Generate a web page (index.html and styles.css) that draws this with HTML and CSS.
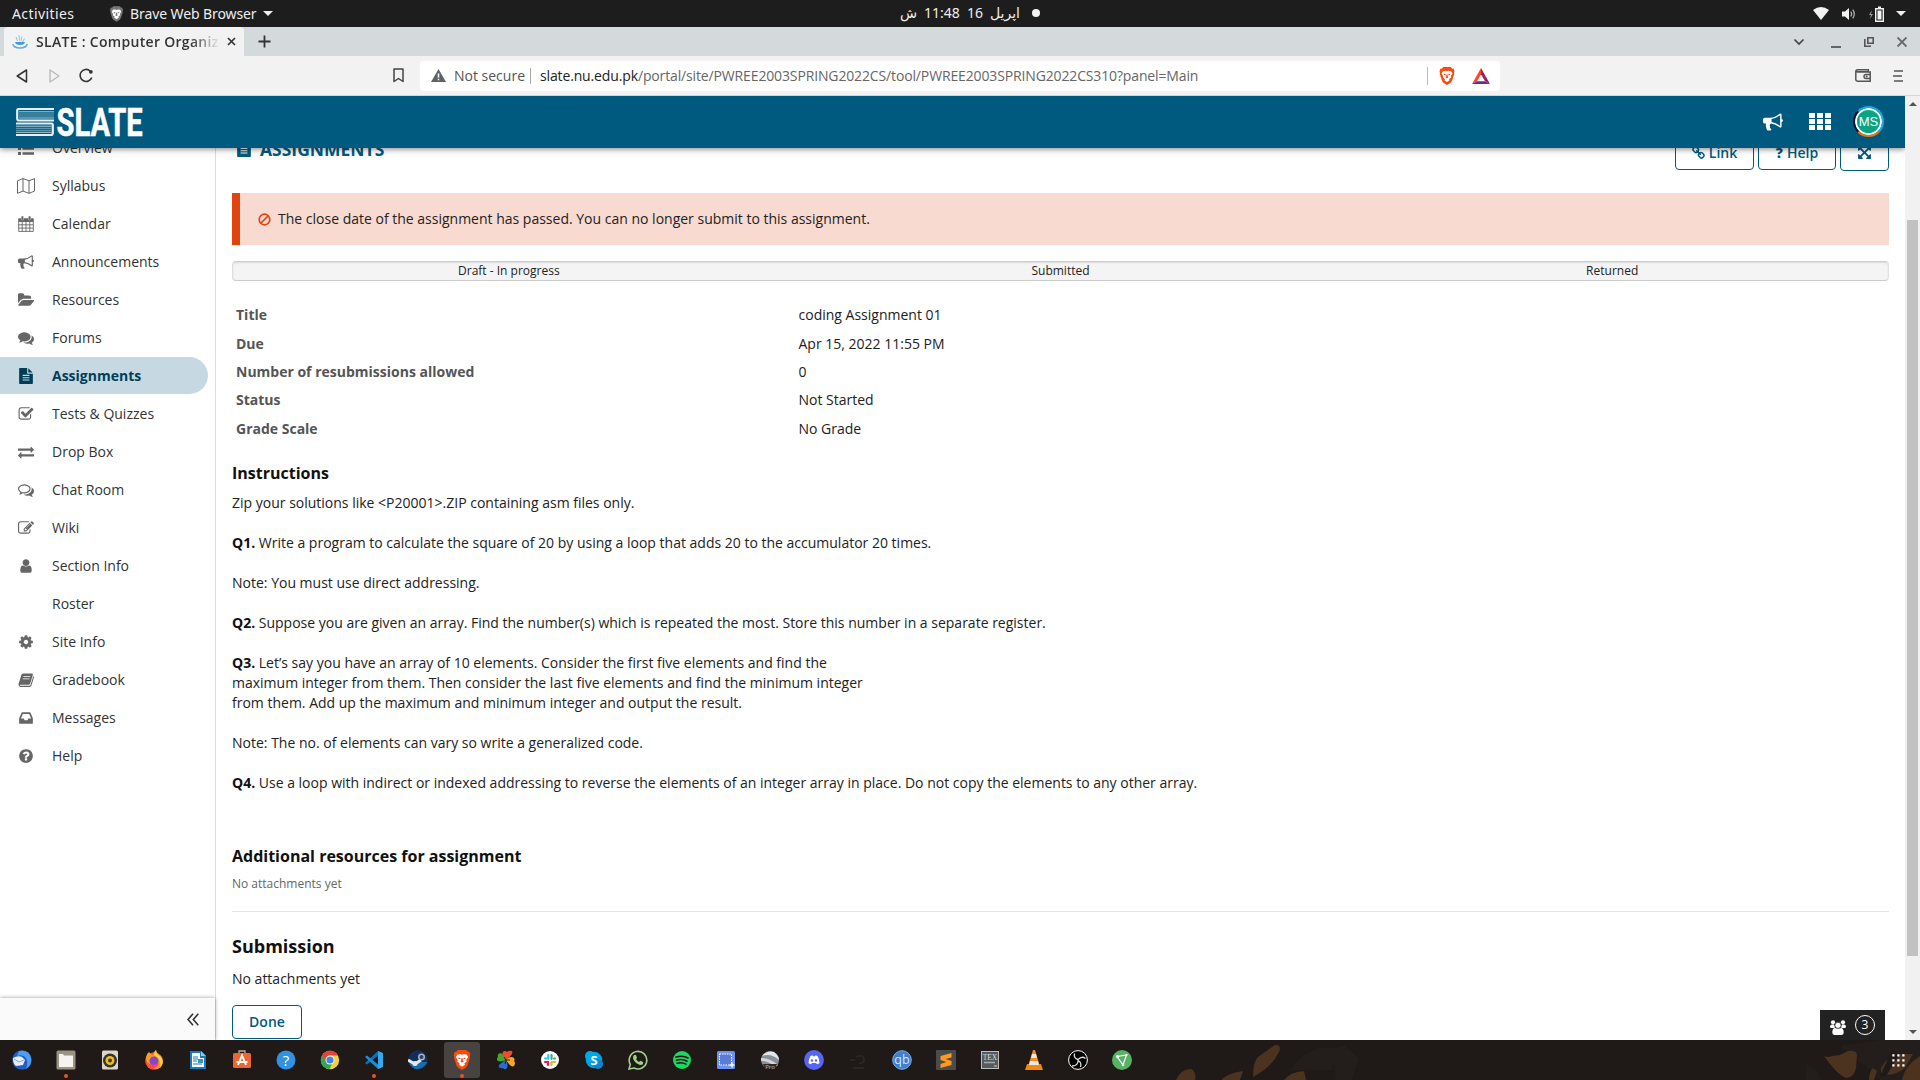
FILE: index.html
```html
<!DOCTYPE html>
<html lang="en">
<head>
<meta charset="utf-8">
<title>SLATE : Computer Organization</title>
<link rel="stylesheet" href="styles.css">
</head>
<body>
<svg class="defs" width="0" height="0">
  <symbol id="bullhorn" viewBox="0 0 1792 1792"><path d="M1664 640q53 0 90.5 37.5t37.5 90.5-37.5 90.5-90.5 37.5v384q0 52-38 90t-90 38q-417-347-812-380-58 19-91 66t-31 100.5 40 92.5q-20 33-23 65.5t6 58 33.5 55 48 50 61.5 50.5q-29 58-111.5 83t-168.5 11.5-132-55.5q-7-23-29.5-87.5t-32-94.5-23-89-15-101 3.5-98.5 22-110.5h-122q-66 0-113-47t-47-113v-192q0-66 47-113t113-47h480q435 0 896-384 52 0 90 38t38 90v384zm-128 604v-954q-394 302-768 343v270q377 42 768 341z"/></symbol>
  <symbol id="folder" viewBox="0 0 1792 1792"><path d="M1815 952q0 31-31 66l-336 396q-43 51-120.5 86.5t-143.5 35.5h-1088q-34 0-60.5-13t-26.5-43q0-31 31-66l336-396q43-51 120.5-86.5t143.5-35.5h1088q34 0 60.5 13t26.5 43zm-343-344v160h-832q-94 0-197 47.5t-164 119.5l-337 396-5 6q0-4-.5-12.5t-.5-12.5v-960q0-92 66-158t158-66h320q92 0 158 66t66 158v32h544q92 0 158 66t66 158z"/></symbol>
  <symbol id="comments" viewBox="0 0 1792 1792"><path d="M1408 768q0 139-94 257t-256.5 186.5-353.5 68.5q-86 0-176-16-124 88-278 128-36 9-86 16h-3q-11 0-20.5-8t-11.5-21q-1-3-1-6.5t.5-6.5 2-6l2.5-5 3.5-5.5 4-5 4.5-5 4-4.5q5-6 23-25t26-29.5 22.5-29 25-38.5 20.5-44q-124-72-195-177t-71-224q0-139 94-257t256.5-186.5 353.5-68.5 353.5 68.5 256.5 186.5 94 257zm384 256q0 120-71 224.5t-195 176.5q10 24 20.5 44t25 38.5 22.5 29 26 29.5 23 25q1 1 4 4.5t4.5 5 4 5 3.5 5.5l2.5 5 2 6 .5 6.5-1 6.5q-3 14-13 22t-22 7q-50-7-86-16-154-40-278-128-90 16-176 16-271 0-472-132 58 4 88 4 161 0 309-45t264-129q125-92 192-212t67-254q0-77-23-152 129 71 204 178t75 230z"/></symbol>
  <symbol id="comments-o" viewBox="0 0 1792 1792"><path d="M704 384q-153 0-286 52t-211.5 141-78.5 191q0 82 53 158t149 132l97 56-35 84q34-20 62-39l44-31 53 10q78 14 153 14 153 0 286-52t211.5-141 78.5-191-78.5-191-211.5-141-286-52zm0-128q191 0 353.5 68.5t256.5 186.5 94 257-94 257-256.5 186.5-353.5 68.5q-86 0-176-16-124 88-278 128-36 9-86 16h-3q-11 0-20.5-8t-11.5-21q-1-3-1-6.5t.5-6.5 2-6l2.5-5 3.5-5.5 4-5 4.5-5 4-4.5q5-6 23-25t26-29.5 22.5-29 25-38.5 20.5-44q-124-72-195-177t-71-224q0-139 94-257t256.5-186.5 353.5-68.5zm822 1169q10 24 20.5 44t25 38.5 22.5 29 26 29.5 23 25q1 1 4 4.5t4.5 5 4 5 3.5 5.5l2.5 5 2 6 .5 6.5-1 6.5q-3 14-13 22t-22 7q-50-7-86-16-154-40-278-128-90 16-176 16-271 0-472-132 58 4 88 4 161 0 309-45t264-129q125-92 192-212t67-254q0-77-23-152 129 71 204 178t75 230q0 120-71 224.5t-195 176.5z"/></symbol>
  <symbol id="file" viewBox="0 0 1792 1792"><path d="M1596 476q14 14 28 36h-472v-472q22 14 36 28zm-476 164h544v1056q0 40-28 68t-68 28h-1344q-40 0-68-28t-28-68v-1600q0-40 28-68t68-28h800v544q0 40 28 68t68 28zm160 736v-64q0-14-9-23t-23-9h-704q-14 0-23 9t-9 23v64q0 14 9 23t23 9h704q14 0 23-9t9-23zm0-256v-64q0-14-9-23t-23-9h-704q-14 0-23 9t-9 23v64q0 14 9 23t23 9h704q14 0 23-9t9-23zm0-256v-64q0-14-9-23t-23-9h-704q-14 0-23 9t-9 23v64q0 14 9 23t23 9h704q14 0 23-9t9-23z"/></symbol>
  <symbol id="check" viewBox="0 0 1792 1792"><path d="M1472 930v318q0 119-84.500 203.500t-203.500 84.500h-832q-119 0-203.500-84.500t-84.500-203.500v-832q0-119 84.500-203.500t203.500-84.500h832q63 0 117 25 15 7 18 23 3 17-9 29l-49 49q-10 10-23 10-3 0-9-2-23-6-45-6h-832q-66 0-113 47t-47 113v832q0 66 47 113t113 47h832q66 0 113-47t47-113v-254q0-13 9-22l64-64q10-10 23-10 6 0 12 3 20 8 20 29zm231-489l-814 814q-24 24-57 24t-57-24l-430-430q-24-24-24-57t24-57l110-110q24-24 57-24t57 24l263 263 647-647q24-24 57-24t57 24l110 110q24 24 24 57t-24 57z"/></symbol>
  <symbol id="exchange" viewBox="0 0 1792 1792"><path d="M1792 1184v192q0 13-9.500 22.500t-22.500 9.500h-1376v192q0 13-9.500 22.500t-22.500 9.500q-12 0-24-10l-319-320q-9-9-9-22 0-14 9-23l320-320q9-9 23-9 13 0 22.500 9.500t9.500 22.500v192h1376q13 0 22.500 9.500t9.500 22.500zm0-544q0 14-9 23l-320 320q-9 9-23 9-13 0-22.500-9.500t-9.500-22.500v-192h-1376q-13 0-22.500-9.500t-9.500-22.500v-192q0-13 9.500-22.500t22.500-9.500h1376v-192q0-14 9-23t23-9q12 0 24 10l319 319q9 9 9 23z"/></symbol>
  <symbol id="pencil" viewBox="0 0 1792 1792"><path d="M888 1184l116-116-152-152-116 116v56h96v96h56zm440-720q-16-16-33 1l-350 350q-17 17-1 33t33-1l350-350q17-17 1-33zm80 594v190q0 119-84.500 203.500t-203.500 84.500h-832q-119 0-203.500-84.500t-84.500-203.500v-832q0-119 84.500-203.500t203.500-84.500h832q63 0 117 25 15 7 18 23 3 17-9 29l-49 49q-14 14-32 8-23-6-45-6h-832q-66 0-113 47t-47 113v832q0 66 47 113t113 47h832q66 0 113-47t47-113v-126q0-13 9-22l64-64q15-15 35-7t20 29zm-96-738l288 288-672 672h-288v-288zm444 132l-92 92-288-288 92-92q28-28 68-28t68 28l152 152q28 28 28 68t-28 68z"/></symbol>
  <symbol id="user" viewBox="0 0 1792 1792"><path d="M1536 1399q0 109-62.500 187t-150.500 78h-854q-88 0-150.500-78t-62.500-187q0-85 8.500-160.500t31.500-152 58.500-131 94-89 134.500-34.500q131 128 313 128t313-128q76 0 134.500 34.500t94 89 58.500 131 31.500 152 8.500 160.500zm-256-887q0 159-112.500 271.500t-271.500 112.500-271.500-112.500-112.500-271.500 112.500-271.500 271.500-112.500 271.500 112.500 112.500 271.500z"/></symbol>
  <symbol id="cog" viewBox="0 0 1792 1792"><path d="M1152 896q0-106-75-181t-181-75-181 75-75 181 75 181 181 75 181-75 75-181zm512-109v222q0 12-8 23t-20 13l-185 28q-19 54-39 91 35 50 107 138 10 12 10 25t-9 23q-27 37-99 108t-94 71q-12 0-26-9l-138-108q-44 23-91 38-16 136-29 186-7 28-36 28h-222q-14 0-24.500-8.500t-11.500-21.500l-28-184q-49-16-90-37l-141 107q-10 9-25 9-14 0-25-11-126-114-165-168-7-10-7-23 0-12 8-23 15-21 51-66.500t54-70.500q-27-50-41-99l-183-27q-13-2-21-12.500t-8-23.500v-222q0-12 8-23t19-13l186-28q14-46 39-92-40-57-107-138-10-12-10-24 0-10 9-23 26-36 98.500-107.500t94.500-71.500q13 0 26 10l138 107q44-23 91-38 16-136 29-186 7-28 36-28h222q14 0 24.500 8.500t11.500 21.500l28 184q49 16 90 37l142-107q9-9 24-9 13 0 25 10 129 119 165 170 7 8 7 22 0 12-8 23-15 21-51 66.500t-54 70.500q26 50 41 98l183 28q13 2 21 12.500t8 23.500z"/></symbol>
  <symbol id="inbox" viewBox="0 0 1792 1792"><path d="M1151 960h316q-1-3-2.500-8t-2.500-8l-212-496h-708l-212 496q-1 2-2.500 8t-2.500 8h316l95 192h320zm513 30v482q0 26-19 45t-45 19h-1408q-26 0-45-19t-19-45v-482q0-62 25-123l238-552q10-25 36.500-42t52.500-17h832q26 0 52.500 17t36.500 42l238 552q25 61 25 123z"/></symbol>
  <symbol id="question" viewBox="0 0 1792 1792"><path d="M1024 1376v-192q0-14-9-23t-23-9h-192q-14 0-23 9t-9 23v192q0 14 9 23t23 9h192q14 0 23-9t9-23zm256-672q0-88-55.500-163t-138.500-116-170-41q-243 0-371 213-15 24 8 42l132 100q7 6 19 6 16 0 25-12 53-68 86-92 34-24 86-24 48 0 85.500 26t37.500 59q0 38-20 61t-68 45q-63 28-115.500 86.500t-52.500 125.500v36q0 14 9 23t23 9h192q14 0 23-9t9-23q0-19 21.500-49.500t54.500-49.500q32-18 49-28.500t46-35 44.500-48 28-60.500 12.500-81zm384 192q0 209-103 385.500t-279.500 279.500-385.500 103-385.500-103-279.500-279.500-103-385.500 103-385.500 279.500-279.500 385.500-103 385.500 103 279.500 279.500 103 385.500z"/></symbol>
  <symbol id="chain" viewBox="0 0 1792 1792"><path d="M1456 1216q0-40-28-68l-208-208q-28-28-68-28-42 0-72 32 3 3 19 18.500t21.500 21.500 15 19 13 25.500 3.500 27.500q0 40-28 68t-68 28q-15 0-27.500-3.500t-25.500-13-19-15-21.500-21.500-18.500-19q-33 31-33 73 0 40 28 68l206 207q27 27 68 27 40 0 68-26l147-146q28-28 28-67zm-703-705q0-40-28-68l-206-207q-28-28-68-28-39 0-68 27l-147 146q-28 28-28 67 0 40 28 68l208 208q27 27 68 27 42 0 72-31-3-3-19-18.500t-21.500-21.500-15-19-13-25.500-3.500-27.500q0-40 28-68t68-28q15 0 27.500 3.500t25.500 13 19 15 21.500 21.500 18.500 19q33-31 33-73zm895 705q0 120-85 203l-147 146q-83 83-203 83-121 0-204-85l-206-207q-83-83-83-203 0-123 88-209l-88-88q-86 88-208 88-120 0-204-84l-208-208q-84-84-84-204t85-203l147-146q83-83 203-83 121 0 204 85l206 207q83 83 83 203 0 123-88 209l88 88q86-88 208-88 120 0 204 84l208 208q84 84 84 204z"/></symbol>
  <symbol id="expand" viewBox="0 0 1792 1792"><path d="M1411 541l-355 355 355 355 144-144q29-31 70-14 39 17 39 59v448q0 26-19 45t-45 19h-448q-42 0-59-40-17-39 14-69l144-144-355-355-355 355 144 144q31 30 14 69-17 40-59 40h-448q-26 0-45-19t-19-45v-448q0-42 40-59 39-17 69 14l144 144 355-355-355-355-144 144q-19 19-45 19-12 0-24-5-40-17-40-59v-448q0-26 19-45t45-19h448q42 0 59 40 17 39-14 69l-144 144 355 355 355-355-144-144q-31-30-14-69 17-40 59-40h448q26 0 45 19t19 45v448q0 42-39 59-13 5-25 5-26 0-45-19z"/></symbol>
  <symbol id="list" viewBox="0 0 16 16"><path d="M0 2h3v3H0zM4.500 2.300H16v2.400H4.500zM0 7h3v3H0zM4.500 7.300H16v2.400H4.500zM0 12h3v3H0zM4.500 12.300H16v2.400H4.500z"/></symbol>
  <symbol id="map" viewBox="0 0 18 16"><path d="M.500 2.800L6 .600l6 2.200L17.500.600v12.500L12 15.300l-6-2.200-5.500 2.200zM6 .600v12.500M12 2.800v12.500" fill="none" stroke="currentColor" stroke-width="1"/></symbol>
  <symbol id="calendar" viewBox="0 0 16 16"><path d="M.700 5.500h14.600v9.900H.700zM.700 8.800h14.600M.700 12.100h14.600M4.200 5.500v10M8 5.500v10M11.800 5.500v10" fill="none" stroke="currentColor" stroke-width=".9"/><path d="M1 2.300h14q.800 0 .800.800v2.600H.200V3.100q0-.800.800-.800z"/><path d="M3.200.900q0-.900.900-.900h.600q.900 0 .900.900v2.200q0 .900-.900.900h-.600q-.900 0-.900-.900zM10.400.900q0-.900.900-.900h.600q.900 0 .900.900v2.200q0 .900-.900.900h-.600q-.900 0-.900-.900z" stroke="#fff" stroke-width=".4"/></symbol>
  <symbol id="book" viewBox="0 0 16 16"><path fill-rule="evenodd" d="M5 1.500h9q1.200.200.800 1.600l-2.600 8.400q-.400 1.300-1.600 1.300H2.400q-.800 0-.700.500.300.500 1 .500h8.800q.800 0 1-.700l2.800-9q.900.600.600 1.500l-2.500 8q-.500 1.300-1.800 1.300H2.700Q.500 14.700.400 12.500L3.300 3q.500-1.300 1.700-1.500zm.600 2.700l-.300.900h6.800l.300-.900zm-.700 2.200l-.300.900h6.800l.300-.900z"/></symbol>
  <symbol id="people" viewBox="0 0 16 15"><circle cx="3" cy="2.300" r="2.100"/><circle cx="13" cy="2.300" r="2.100"/><path d="M0 6.500Q.300 4.400 2 4.400h2Q5 5 4.700 8H1.500Q0 8 0 6.500zM16 6.500q-.300-2.100-2-2.100h-2q-1 .600-.700 3.600h3.200q1.500 0 1.500-1.500z"/><circle cx="8" cy="5.300" r="3" stroke="#222" stroke-width=".6"/><path d="M2.300 12.500q0-4.500 2.700-4.500 3 1.600 6 0 2.700 0 2.700 4.500 0 2.400-2 2.400H4.300q-2 0-2-2.400z"/></symbol>
  <symbol id="lion" viewBox="0 0 20 24"><path d="M5 0h10l2 2.200 1.700-.2L20 6l-.700 2 .300 1.200-3 9.300Q15.500 21 10 24 4.500 21 3.400 18.500L.400 9.200.700 8 0 6l1.300-4L3 2.200z"/><path d="M4.500 5.500L8 5l2 .8 2-.8 3.500.5 1.800 3-2.200 3.500.600 1.800-3 2.400.8 1.600L10 20l-3.500-2.200.8-1.600-3-2.400.6-1.800-2.200-3.500z" fill="#fff"/><path d="M5.500 9l3 .8-.5 1.300-2-.6zM14.500 9l-3 .8.500 1.300 2-.6zM9.200 10h1.600l.4 3.200.8.800-2 1-2-1 .8-.8z" class="lion-face"/></symbol>
</svg>

<div class="topbar">
  <span class="activities">Activities</span>
  <svg class="top-lion" width="13" height="16"><use href="#lion"/></svg>
  <span class="app-name">Brave Web Browser</span>
  <i class="caret"></i>
  <div class="clock"><span class="ar">ش</span><span>11:48</span><span>16</span><span class="ar">اپریل</span><i class="dot"></i></div>
  <div class="tray">
    <svg width="16" height="13" viewBox="0 0 16 13"><path d="M0 3Q8-3 16 3L8 13z" fill="#f2f2f2"/></svg>
    <svg width="16" height="14" viewBox="0 0 16 14"><path d="M1 4.500h3L8 1v12L4 9.500H1z" fill="#f2f2f2"/><path d="M9.800 4.500q1.700 2.500 0 5M11.800 2.600q3 4.400 0 8.800" fill="none" stroke="#aaa" stroke-width="1.300"/></svg>
    <svg width="15" height="16" viewBox="0 0 15 16"><path d="M3 4L0 9h2l-1 4 3-5H2z" fill="#999"/><path d="M6.700 2.700h7.600v12.600H6.700z" fill="none" stroke="#f2f2f2" stroke-width="1.400"/><path d="M8.500 4.500h4v9h-4zM9 .5h3v2H9z" fill="#f2f2f2"/></svg>
    <i class="caret"></i>
  </div>
</div>

<div class="tabstrip">
  <div class="tab">
    <svg width="16" height="14" viewBox="0 0 16 14"><path d="M4 2l1.500 4M7 0l.5 5.500M10 1.500L9 6M12.500 3.500L10.500 7" stroke="#8bc3e8" stroke-width="1" fill="none"/><path d="M3 7h10q-.500 3-5 3T3 7z" fill="#3f9bdc"/><path d="M.700 9q1 4 7.300 4t7.300-4" fill="none" stroke="#5bace2" stroke-width="1.400"/></svg>
    <span class="tab-title">SLATE : Computer Organiza</span>
    <svg class="tab-x" width="9" height="9" viewBox="0 0 9 9"><path d="M1 1l7 7M8 1L1 8" stroke="#333" stroke-width="1.700"/></svg>
  </div>
  <svg width="13" height="13" viewBox="0 0 13 13"><path d="M6.500.500v12M.500 6.500h12" stroke="#333" stroke-width="1.800"/></svg>
  <div class="win-buttons">
    <svg width="12" height="8" viewBox="0 0 12 8"><path d="M1.500 1.500L6 6l4.500-4.500" stroke="#444" stroke-width="1.700" fill="none"/></svg>
    <svg width="10" height="12" viewBox="0 0 10 12"><path d="M0 10h10v2H0z" fill="#666"/></svg>
    <svg width="10" height="10" viewBox="0 0 10 10"><path d="M3.800.800h5.400v5.400H3.800zM.800 2v7.200H7" fill="none" stroke="#555" stroke-width="1.600"/></svg>
    <svg width="10" height="10" viewBox="0 0 10 10"><path d="M.500.500l9 9M9.500.500l-9 9" stroke="#666" stroke-width="1.900"/></svg>
  </div>
</div>

<div class="toolbar">
  <svg class="nav" width="12" height="14" viewBox="0 0 12 14"><path d="M10.500 1v12L1.200 7z" fill="none" stroke="#333" stroke-width="1.500" stroke-linejoin="round"/></svg>
  <svg class="nav" width="12" height="14" viewBox="0 0 12 14"><path d="M2 1v12l9-6z" fill="none" stroke="#bbb" stroke-width="1.400" stroke-linejoin="round"/></svg>
  <svg class="nav" width="15" height="15" viewBox="0 0 15 15"><path d="M12.800 9.500A6 6 0 1 1 11 2.800" fill="none" stroke="#333" stroke-width="1.600"/><circle cx="11.800" cy="3.800" r="1.900" fill="#333"/></svg>
  <svg class="bookmark" width="11" height="15" viewBox="0 0 11 15"><path d="M1 1h9v12.500L5.500 10.500 1 13.500z" fill="none" stroke="#444" stroke-width="1.500" stroke-linejoin="round"/></svg>
  <div class="omnibox">
    <svg width="15" height="13" viewBox="0 0 15 13"><path d="M7.500 0L15 13H0z" fill="#5f6368"/><path d="M6.700 4.500h1.600v4H6.700zM6.700 9.700h1.600v1.600H6.700z" fill="#fff"/></svg>
    <span class="not-secure">Not secure</span>
    <span class="url"><b>slate.nu.edu.pk</b>/portal/site/PWREE2003SPRING2022CS/tool/PWREE2003SPRING2022CS310?panel=Main</span>
    <div class="shields">
      <svg class="orange" width="16" height="18"><use href="#lion"/></svg>
      <svg width="18" height="16" viewBox="0 0 18 16"><path d="M9 0L0 16l5-2.800 4-7z" fill="#ff4724"/><path d="M9 0l9 16-5-2.800-4-7z" fill="#9e1f63"/><path d="M0 16h18l-5-2.800H5z" fill="#662d91"/></svg>
    </div>
  </div>
  <div class="tools-right">
    <svg width="16" height="13" viewBox="0 0 16 13"><path d="M.800 2.500q0-1.700 1.700-1.700h10.800v2H1M.800 2.200v8.300q0 1.700 1.700 1.700h12.700V3H2" fill="none" stroke="#555" stroke-width="1.500"/><path d="M15 5.500h-4q-2 0-2 2t2 2h4" fill="none" stroke="#555" stroke-width="1.400"/><circle cx="11.700" cy="7.500" r="1"/></svg>
    <svg width="10" height="12" viewBox="0 0 10 12"><path d="M1 1h9M0 6h9M1 11h9" stroke="#555" stroke-width="1.700"/></svg>
  </div>
</div>

<div class="viewport">
  <div class="page">
    <header class="site-header">
      <svg class="logo" width="128" height="30" viewBox="0 0 128 30"><path d="M38 2H2.500Q1.200 2 1.200 3.500v8q0 2 1.800 2h35" fill="none" stroke="#e8eef2" stroke-width="2.200"/><path d="M0 16.500h35.500q1.300 0 1.300 1.500v8q0 2-1.800 2H0" fill="none" stroke="#e8eef2" stroke-width="2.200"/><path d="M3 4.800h35M3 11h35M0 19.200h35.500M0 25.300h35.500" stroke="#b5d0dc" stroke-width="1"/><path d="M3 7h35M3 9h35M0 21.300h35.500M0 23.300h35.500" stroke="#6fa3ba" stroke-width="1"/><text x="40.500" y="28.600" textLength="86" lengthAdjust="spacingAndGlyphs" class="logo-text">SLATE</text></svg>
      <svg class="horn" width="20" height="20"><use href="#bullhorn"/></svg>
      <svg class="apps" width="22" height="17" viewBox="0 0 22 17"><path d="M0 0h6v5H0zM8 0h6v5H8zM16 0h6v5h-6zM0 6h6v5H0zM8 6h6v5H8zM16 6h6v5h-6zM0 12h6v5H0zM8 12h6v5H8zM16 12h6v5h-6z" fill="#fff"/></svg>
      <div class="avatar">MS</div>
    </header>
    <div class="columns">
      <aside class="sidebar">
        <nav class="menu">
          <a><svg><use href="#list"/></svg>Overview</a>
          <a><svg class="wide"><use href="#map"/></svg>Syllabus</a>
          <a><svg><use href="#calendar"/></svg>Calendar</a>
          <a><svg><use href="#bullhorn"/></svg>Announcements</a>
          <a><svg><use href="#folder"/></svg>Resources</a>
          <a><svg><use href="#comments"/></svg>Forums</a>
          <a class="active"><svg><use href="#file"/></svg>Assignments</a>
          <a><svg><use href="#check"/></svg>Tests &amp; Quizzes</a>
          <a><svg><use href="#exchange"/></svg>Drop Box</a>
          <a><svg><use href="#comments-o"/></svg>Chat Room</a>
          <a><svg><use href="#pencil"/></svg>Wiki</a>
          <a><svg><use href="#user"/></svg>Section Info</a>
          <a><svg></svg>Roster</a>
          <a><svg><use href="#cog"/></svg>Site Info</a>
          <a><svg><use href="#book"/></svg>Gradebook</a>
          <a><svg><use href="#inbox"/></svg>Messages</a>
          <a><svg><use href="#question"/></svg>Help</a>
        </nav>
        <div class="collapse"><svg width="12" height="13" viewBox="0 0 12 13"><path d="M6 .800L1 6.500l5 5.700M11.300.800l-5 5.700 5 5.700" fill="none" stroke="#333" stroke-width="1.600"/></svg></div>
      </aside>
      <main class="content">
        <div class="tool-head">
          <h1><svg width="16" height="16"><use href="#file"/></svg>Assignments</h1>
          <div class="head-buttons">
            <span class="btn link"><svg width="14" height="14"><use href="#chain"/></svg>Link</span>
            <span class="btn help"><b>?</b>Help</span>
            <span class="btn full"><svg width="15" height="15"><use href="#expand"/></svg></span>
          </div>
        </div>
        <div class="alert"><svg width="13" height="13" viewBox="0 0 13 13"><circle cx="6.500" cy="6.500" r="5.300" fill="none" stroke="#e2440d" stroke-width="1.700"/><path d="M3 10l7-7" stroke="#e2440d" stroke-width="1.700"/></svg>The close date of the assignment has passed. You can no longer submit to this assignment.</div>
        <div class="progress"><span>Draft - In progress</span><span>Submitted</span><span>Returned</span></div>
        <dl class="details">
          <dt>Title</dt><dd>coding Assignment 01</dd>
          <dt>Due</dt><dd>Apr 15, 2022 11:55 PM</dd>
          <dt>Number of resubmissions allowed</dt><dd>0</dd>
          <dt>Status</dt><dd>Not Started</dd>
          <dt>Grade Scale</dt><dd>No Grade</dd>
        </dl>
        <h2>Instructions</h2>
        <div class="instructions">
          <p>Zip your solutions like &lt;P20001&gt;.ZIP containing asm files only.</p>
          <p><b>Q1.</b> Write a program to calculate the square of 20 by using a loop that adds 20 to the accumulator 20 times.</p>
          <p>Note: You must use direct addressing.</p>
          <p><b>Q2.</b> Suppose you are given an array. Find the number(s) which is repeated the most. Store this number in a separate register.</p>
          <p><b>Q3.</b> Let’s say you have an array of 10 elements. Consider the first five elements and find the<br>maximum integer from them. Then consider the last five elements and find the minimum integer<br>from them. Add up the maximum and minimum integer and output the result.</p>
          <p>Note: The no. of elements can vary so write a generalized code.</p>
          <p><b>Q4.</b> Use a loop with indirect or indexed addressing to reverse the elements of an integer array in place. Do not copy the elements to any other array.</p>
        </div>
        <h2 class="extra">Additional resources for assignment</h2>
        <p class="none-small">No attachments yet</p>
        <h3>Submission</h3>
        <p class="none">No attachments yet</p>
        <span class="btn done">Done</span>
      </main>
    </div>
    <div class="chat"><svg width="16" height="15"><use href="#people"/></svg><span>3</span></div>
  </div>
  <div class="scrollbar"><i class="up"></i><div class="thumb"></div><i class="down"></i></div>
</div>

<div class="dock">
  <svg class="leaves" width="780" height="40" viewBox="0 0 780 40">
    <path d="M192 10l13-4 14 12-7 22h-16zM150 30l12-14 16-8 20 0-6 22zM666 24l10 6 6 10h-16zM700 6l40-6h40v40h-40l-12-12z" fill="#231e1c"/>
    <path d="M36 40q5-11 15-11 6 3 4 11zM113 37q0-15 5-20l17-12q7 0 4 7-7 15-26 25zM82 39q7-6 21-8l-3 9H82zM144 40q6-8 20-9l2 9z" fill="#4c3320"/>
    <path d="M684 16q4 2 8 0l8-1 8-4q7-1 9 3l-1 14q-2 9-9 10-8-1-23-22zM733 28l4 3-3 9h-5q0-8 4-12zM741 28q7-12 17-14h15l-8 14q-13 10-24 5zM762 40q3-15 18-24v24z" fill="#4c3320"/>
    <path d="M752 10l8 4-14 22h-6z" fill="#1f1a17"/>
  </svg>
  <div class="dock-icons">
    <span><svg viewBox="0 0 20 20"><circle cx="10" cy="10" r="9.800" fill="#1f5fbf"/><path d="M7 1q10-2 12 7 1 7-5 11 3-8-1-12-3-3-8-1z" fill="#4f9df0"/><path d="M1 8q5-3 9-1l3 3-2 5-7 1q-3-2-3-8z" fill="#e8eef6"/><path d="M2 9l5 3 5-2" stroke="#8ba5c4" fill="none"/></svg></span>
    <span class="running"><svg viewBox="0 0 20 20"><rect x=".5" y=".5" width="19" height="19" rx="1.500" fill="#9b9283"/><path d="M3 4h4l1 1.500h9V17H3z" fill="#f5f2ef"/></svg></span>
    <span><svg viewBox="0 0 20 20"><rect x="2" y=".5" width="16" height="19" rx="1.500" fill="#dbd6cc"/><circle cx="10" cy="10.500" r="7" fill="#333"/><circle cx="10" cy="10.500" r="4.500" fill="#f0bd1a"/><circle cx="10" cy="10.500" r="2" fill="#443822"/></svg></span>
    <span><svg viewBox="0 0 20 20"><circle cx="10" cy="11" r="8.800" fill="#ff4b38"/><path d="M2 7q1-4 3-5 1 2 4 3 0-3 3-5 1 4 5 6 4 6 0 11-5 4-10 0-5-3-5-10z" fill="#ff9a25"/><path d="M12 0q0 4 4 6 5 6 0 12 2-9-6-13z" fill="#ffd93d"/><circle cx="10" cy="11" r="4.500" fill="#8348c9"/><path d="M3 12q5 5 12 1-2 6-8 5z" fill="#fb4264"/></svg></span>
    <span><svg viewBox="0 0 20 20"><path d="M2 1h11l5 5v13H2z" fill="#167abf"/><path d="M4 3h8v5h4v9H4z" fill="#fff"/><path d="M13 1l5 5h-5z" fill="#8bc8ec"/><path d="M5 7h5M5 9h5M5 11h4M5 14h9" stroke="#167abf"/><path d="M10 9h5v4h-5z" fill="#3b91c5"/></svg></span>
    <span><svg viewBox="0 0 20 20"><path d="M7 3V1h6v2" fill="none" stroke="#c2ae8e" stroke-width="1.300"/><rect x="1" y="3" width="18" height="15" rx="1.500" fill="#ed6630"/><path d="M6 15l4-9.500 4 9.500M4.500 12h11" fill="none" stroke="#fff" stroke-width="1.900"/></svg></span>
    <span><svg viewBox="0 0 20 20"><circle cx="10" cy="10" r="9.500" fill="#3292df"/><text x="10" y="15.500" text-anchor="middle" font-size="15" fill="#fff">?</text></svg></span>
    <span><svg viewBox="0 0 20 20"><circle cx="10" cy="10" r="9.200" fill="#f9cf3e"/><path d="M2 5.500A9.200 9.200 0 0 0 9.500 19.200L12 14z" fill="#38a552"/><path d="M2 5.400a9.200 9.200 0 0 1 16 0H10L6 11z" fill="#e54335"/><circle cx="10" cy="10" r="4.500" fill="#fff"/><circle cx="10" cy="10" r="3.600" fill="#4285ea"/></svg></span>
    <span class="running"><svg viewBox="0 0 20 20"><path d="M14 1v4.500L3 14.500 1 13z" fill="#0a70bb"/><path d="M14 19v-4.500L3 5.500 1 7z" fill="#1b8edb"/><path d="M14 1l5 2v14l-5 2z" fill="#37a8ef"/></svg></span>
    <span><svg viewBox="0 0 20 20"><circle cx="10" cy="10" r="9.700" fill="#132e5b"/><path d="M.500 12q5 10 13 6 4-2 6-6z" fill="#1b6ca8"/><path d="M0 10l7 4 6-4" stroke="#e6e9ec" stroke-width="3" fill="none"/><circle cx="13.500" cy="7" r="3.500" fill="#aab4c4"/><circle cx="13.500" cy="7" r="2" fill="#26406c"/><circle cx="7" cy="13.500" r="2.500" fill="#e6e9ec"/></svg></span>
    <span class="running focused"><svg viewBox="0 0 20 20"><g class="orange"><use href="#lion" x="1.500" width="17" height="20"/></g></svg></span>
    <span><svg viewBox="0 0 20 20"><path d="M10 10Q4 3 8 1q2-.500 3 1 2-2 5-1 2 3-6 9z" fill="#ef4c2d"/><path d="M10 10q5-5 8-2 1 2 0 3 2 2 0 5-3 2-8-6z" fill="#f6a623"/><path d="M10 10q3 7 0 9-2 1-3-1-3 1-4-1-2-2 7-7z" fill="#286ed0"/><path d="M10 10Q3 13 1 10q-.500-2 1-3-1-3 2-4 3 0 6 7z" fill="#45a62a"/><path d="M10 10l-2-3M10 10l4 0M10 10l-1 4" stroke="#222"/></svg></span>
    <span><svg viewBox="0 0 20 20"><circle cx="10" cy="10" r="9" fill="#fff"/><g fill="none" stroke-width="2.200" stroke-linecap="round"><path d="M8.300 5v4M5 8.500h3" stroke="#36c5f0"/><path d="M11.500 5v4M14 8.500h1" stroke="#2eb67d"/><path d="M11.500 12h3.500M11.500 12v3" stroke="#ecb22e"/><path d="M5 12h3v3" stroke="#e01e5a"/></g></svg></span>
    <span><svg viewBox="0 0 20 20"><circle cx="10" cy="10" r="8.300" fill="#00a2e8"/><circle cx="6" cy="6" r="5" fill="#00a8ee"/><circle cx="14" cy="14" r="5" fill="#078ad4"/><text x="10" y="14.800" text-anchor="middle" font-size="13" font-weight="700" fill="#fff">S</text></svg></span>
    <span><svg viewBox="0 0 20 20"><path d="M1 19l1.300-4.600A8.800 8.800 0 1 1 6 18z" fill="none" stroke="#a0d08b" stroke-width="1.600"/><path d="M6 5l2 0 1 3-1 1q1 2 3 3l1.300-1.300L15 12v2q-2 2-5 0-4-2-5-6 0-2 1-3z" fill="#a0d08b"/></svg></span>
    <span><svg viewBox="0 0 20 20"><circle cx="10" cy="10" r="9" fill="#1ed760"/><path d="M4 7q7-2 12 1M4.500 10.200q6-1.800 10.500 1M5 13.300q5-1.500 9 .8" fill="none" stroke="#171512" stroke-width="1.600" stroke-linecap="round"/></svg></span>
    <span><svg viewBox="0 0 20 20"><rect x="1" y="1" width="18" height="18" rx="1.500" fill="#6f92f0"/><rect x="3.500" y="4" width="12" height="11" fill="#5a7cd8" stroke="#fff" stroke-dasharray="1.500 1"/><path d="M16 12.500v5M13.500 15h5" stroke="#fff" stroke-width="1.300"/></svg></span>
    <span><svg viewBox="0 0 20 20"><circle cx="10" cy="10" r="9" fill="#8b8f98"/><path d="M2 6q5-6 12-4 5 4 5 8-8-7-17-4z" fill="#e3e5e8"/><path d="M1 8q9 0 17 7l-3 2Q8 10 1 11z" fill="#d3d5da"/><path d="M3 14h14l-2 5H5z" fill="#292929"/><text x="10" y="19" text-anchor="middle" font-size="6" fill="#bbb">Pro</text></svg></span>
    <span><svg viewBox="0 0 20 20"><circle cx="10" cy="10" r="9.900" fill="#5865f2"/><path d="M6.500 6l2-.700.500 1h2l.500-1 2 .700q2 3 2 7-1 1-2.500 1.300l-1-1.300H8l-1 1.300Q5.500 14 4.500 13q0-4 2-7z" fill="#fff"/><circle cx="8" cy="10.500" r="1.200" fill="#5865f2"/><circle cx="12" cy="10.500" r="1.200" fill="#5865f2"/></svg></span>
    <span><svg viewBox="0 0 20 20"><path d="M2 10h5M8 7q7-3 8 2 0 5-5 4M5 18h11" fill="none" stroke="#2a2625" stroke-width="2"/></svg></span>
    <span><svg viewBox="0 0 20 20"><circle cx="10" cy="10" r="9.300" fill="#3f7fce" stroke="#7fb0e8"/><text x="10" y="13.500" text-anchor="middle" font-size="12.500" fill="#d2e6fb">qb</text></svg></span>
    <span><svg viewBox="0 0 20 20"><rect width="20" height="20" rx="1" fill="#4b4b4b"/><path d="M15.500 3v4.500L9.500 9l6 2v4l-11 3v-4l6-2-6-2V6z" fill="#ff9a1e"/></svg></span>
    <span><svg viewBox="0 0 20 20"><rect x="1.500" y="1.500" width="17" height="17" fill="#555b5e" stroke="#bdbdbd"/><text x="10" y="10" text-anchor="middle" font-size="7.500" fill="#ddd" class="serif">TEX</text><path d="M4 12.500h11M14 16h3" stroke="#aaa" stroke-width="1.600"/></svg></span>
    <span><svg viewBox="0 0 20 20"><path d="M3 14h14l2 6H1z" fill="#f08713"/><path d="M9 0h2l4.500 15q-5.500 3-11 0z" fill="#f48a1c"/><path d="M8 4h4l1 4H7zM6 11h8l1 4H5z" fill="#e7e7e7"/></svg></span>
    <span><svg viewBox="0 0 20 20"><circle cx="10" cy="10" r="9.400" fill="#000" stroke="#fff"/><path d="M6.500 3.500q-1 5 3.500 6 4-4 7.500-1M10 9.500q1 6-6 6.500M10 10.500q4 2 2.500 6.500" fill="none" stroke="#ddd" stroke-width="1.300"/></svg></span>
    <span><svg viewBox="0 0 20 20"><circle cx="10" cy="10" r="10" fill="#56b366"/><path d="M5 6.500l9.500-1.500L11 15z" fill="none" stroke="#fff" stroke-width="1.200"/><circle cx="5.500" cy="6.500" r="1.600" fill="#fff"/><circle cx="14.500" cy="5" r="1.100" fill="#fff"/><circle cx="11" cy="15" r="1.300" fill="#fff"/></svg></span>
  </div>
  <svg class="grid" width="13" height="13" viewBox="0 0 13 13"><path d="M.300.300h2.200v2.200H.300zM5.300.300h2.200v2.200H5.300zM10.300.300h2.200v2.200h-2.200zM.300 5.300h2.200v2.200H.300zM5.300 5.300h2.200v2.200H5.300zM10.300 5.300h2.200v2.200h-2.200zM.300 10.300h2.200v2.200H.300zM5.300 10.300h2.200v2.200H5.300zM10.300 10.300h2.200v2.200h-2.200z" fill="#fff"/></svg>
</div>
</body>
</html>
```
FILE: styles.css
```css
* { box-sizing: border-box; }
body {
  margin: 0;
  width: 1920px;
  height: 1080px;
  overflow: hidden;
  display: flex;
  flex-direction: column;
  font-family: "Open Sans", "Noto Sans", sans-serif;
  font-size: 14px;
  line-height: 20px;
  color: #222;
  background: #fff;
}
svg { display: block; flex: none; fill: currentColor; }
.defs { position: absolute; }
.lion-face { fill: currentColor; }
.orange { color: #fb4a0d; }

/* desktop top bar */
.topbar {
  height: 27px;
  flex: none;
  display: flex;
  align-items: center;
  background: #1d1d1d;
  color: #eee;
  font-family: "Noto Sans", sans-serif;
  padding: 0 14px 0 12px;
  position: relative;
}
.activities { width: 98px; letter-spacing: .4px; }
.top-lion { color: #777; margin-right: 7px; }
.app-name { letter-spacing: -.1px; margin-right: 7px; }
.caret { border: 5px solid transparent; border-top-color: #eee; border-bottom: 0; }
.clock { position: absolute; left: 900px; top: 3px; display: flex; gap: 7px; align-items: center; }
.ar { font-family: "DejaVu Sans", sans-serif; }
.dot { width: 8px; height: 8px; border-radius: 50%; background: #f2f2f2; margin-left: 5px; }
.tray { margin-left: auto; display: flex; align-items: center; gap: 12px; }

/* tabs */
.tabstrip {
  height: 29px;
  flex: none;
  background: #d4d9dc;
  display: flex;
  align-items: center;
  padding: 0 13px 0 4px;
}
.tab {
  width: 240px;
  height: 29px;
  background: #f2f2f2;
  border-radius: 4px 4px 0 0;
  display: flex;
  align-items: center;
  padding-left: 8px;
  margin-right: 14px;
}
.tab-title {
  width: 184px;
  margin-left: 8px;
  overflow: hidden;
  white-space: nowrap;
  font-weight: 600;
  letter-spacing: .3px;
  color: #333;
  -webkit-mask-image: linear-gradient(90deg, #000 84%, transparent 100%);
}
.tab-x { margin-left: 7px; }
.win-buttons { margin-left: auto; display: flex; align-items: center; gap: 23px; }
.win-buttons svg:first-child { margin-right: 3px; }

/* address bar */
.toolbar {
  height: 40px;
  flex: none;
  background: #f2f2f2;
  border-bottom: 1px solid #d5d5d5;
  display: flex;
  align-items: center;
  padding: 0 17px 0 16px;
  color: #555;
}
.nav { margin-right: 20px; }
.nav:nth-child(2) { margin-right: 19px; }
.bookmark { margin: 0 16px 0 279px; }
.omnibox {
  width: 1080px;
  height: 30px;
  background: #fff;
  border-radius: 4px;
  display: flex;
  align-items: center;
  padding: 0 10px 0 11px;
}
.not-secure { width: 77px; margin-left: 8px; padding-right: 8px; border-right: 1px solid #aaa; line-height: 16px; white-space: nowrap; }
.url { margin-left: 9px; color: #666; white-space: nowrap; letter-spacing: -.14px; }
.url b { font-weight: 400; color: #222; }
.shields { margin-left: auto; display: flex; align-items: center; gap: 17px; border-left: 1px solid #bbb; padding-left: 11px; }
.tools-right { margin-left: auto; display: flex; align-items: center; gap: 22px; }

/* page */
.viewport { height: 944px; flex: none; display: flex; }
.page { width: 1905px; position: relative; overflow: hidden; }
.site-header {
  height: 52px;
  position: relative;
  z-index: 2;
  background: #005a80;
  box-shadow: 0 1px 6px rgba(0, 0, 0, .5);
  display: flex;
  align-items: center;
  padding: 0 21px 1px 16px;
  color: #fff;
}
.logo { overflow: visible; }
.logo-text { font: 700 38px "Roboto", sans-serif; fill: #fff; stroke: #fff; stroke-width: .6px; }
.horn { margin-left: auto; margin-right: 26px; }
.apps { margin-right: 22px; }
.avatar {
  width: 31px;
  height: 31px;
  border-radius: 50%;
  border: 2px solid;
  border-color: #18a9e4 #18a9e4 #e87511 #0b0e35;
  background: #0ba482;
  box-shadow: inset 0 0 0 2px #fff;
  font: 13px/27px "Liberation Sans", sans-serif;
  text-align: center;
}
.columns { display: flex; height: 892px; }
.sidebar {
  width: 216px;
  border-right: 1px solid #ddd;
  display: flex;
  flex-direction: column;
}
.menu { height: 869px; flex: none; margin-top: -19px; display: flex; flex-direction: column; gap: 1px; }
.menu a {
  height: 37px;
  width: 208px;
  display: flex;
  align-items: center;
  flex: none;
  padding-left: 18px;
  color: #333;
}
.menu svg { width: 16px; height: 16px; margin-right: 18px; color: #666; }
.menu svg.wide { width: 18px; margin: 0 17px 0 -1px; }
.menu .active { background: #c6d9e3; border-radius: 0 19px 19px 0; font-weight: 700; color: #003e58; }
.menu .active svg { color: #003e58; }
.collapse {
  height: 43px;
  background: #fafafa;
  box-shadow: 0 0 4px rgba(0, 0, 0, .4);
  display: flex;
  align-items: center;
  justify-content: flex-end;
  padding-right: 16px;
}
.content { width: 1657px; margin-left: 16px; margin-top: -12px; }
.tool-head { display: flex; justify-content: space-between; height: 57px; }
h1 {
  margin: 0 0 0 4px;
  height: 26px;
  display: flex;
  align-items: center;
  gap: 8px;
  color: #005a80;
  font-size: 17.5px;
  text-transform: uppercase;
}
.head-buttons { display: flex; gap: 4px; }
.btn {
  display: flex;
  align-items: center;
  justify-content: center;
  height: 34px;
  border: 1px solid #005a80;
  border-radius: 4px;
  color: #005a80;
  font-weight: 600;
}
.link { width: 79px; gap: 3px; }
.help { width: 78px; gap: 4px; }
.help b { font-weight: 800; }
.full { width: 49px; height: 35px; padding-bottom: 2px; }
.alert {
  height: 52px;
  border-left: 8px solid #e2440d;
  background: #f9dad0;
  display: flex;
  align-items: center;
  gap: 7px;
  padding-left: 18px;
}
.progress {
  height: 20px;
  margin-top: 16px;
  display: flex;
  background: #f4f4f4;
  border: 1px solid #ccc;
  border-color: #ccc #e2e2e2 #ccc #ddd;
  border-radius: 4px;
  box-shadow: inset 0 1px 2px rgba(0, 0, 0, .1);
  font-size: 12px;
  line-height: 18px;
}
.progress span { flex: 1; text-align: center; }
.details { margin: 20px 0 0 4px; display: grid; grid-template-columns: 562.5px 1fr; grid-auto-rows: 28.4px; align-items: center; }
dt { font-weight: 700; color: #555; }
dd { margin: 0; }
h2 { margin: 18px 0 0; font-size: 16px; line-height: 24px; color: #111; }
.instructions { margin-top: 8px; }
.instructions p { margin: 0 0 20px; }
.instructions b { color: #111; }
.extra { margin-top: 51px; }
.none-small { margin: 6px 0 0; font-size: 12px; color: #666; padding-bottom: 17px; border-bottom: 1px solid #e5e5e5; }
h3 { margin: 21px 0 0; font-size: 18px; line-height: 26px; color: #111; }
.none { margin: 10px 0 0; }
.done { width: 70px; margin-top: 16px; }
.chat {
  position: absolute;
  right: 20px;
  bottom: 0;
  width: 65px;
  height: 30px;
  background: #222;
  color: #fff;
  display: flex;
  align-items: center;
  padding: 0 10px;
  justify-content: space-between;
}
.chat svg { margin-top: 4px; }
.chat span { width: 20px; height: 20px; border: 1px solid #fff; border-radius: 50%; font-size: 12px; line-height: 17px; text-align: center; }
.scrollbar { width: 15px; background: #f1f1f1; display: flex; flex-direction: column; align-items: center; padding: 6px 0; }
.up { border: 4px solid transparent; border-top: 0; border-bottom-color: #555; }
.thumb { width: 11px; height: 736px; margin-top: 114px; background: #c1c1c1; }
.down { margin-top: auto; border: 4px solid transparent; border-bottom: 0; border-top-color: #555; }

/* dock */
.dock { height: 40px; flex: none; background: #1f1a17; position: relative; display: flex; align-items: center; }
.leaves { position: absolute; right: 0; top: 0; }
.dock-icons { display: flex; padding-left: 4px; gap: 8px; position: relative; }
.dock-icons > span { width: 36px; height: 36px; border-radius: 3px; display: flex; align-items: center; justify-content: center; position: relative; }
.dock-icons svg { width: 20px; height: 20px; }
.focused { background: #474341; }
.running::after { content: ""; position: absolute; left: 16px; bottom: 0; width: 4px; height: 4px; border-radius: 50%; background: #e95420; }
.serif { font-family: "Liberation Serif", serif; }
.grid { position: absolute; left: 1892px; top: 14px; }
```
